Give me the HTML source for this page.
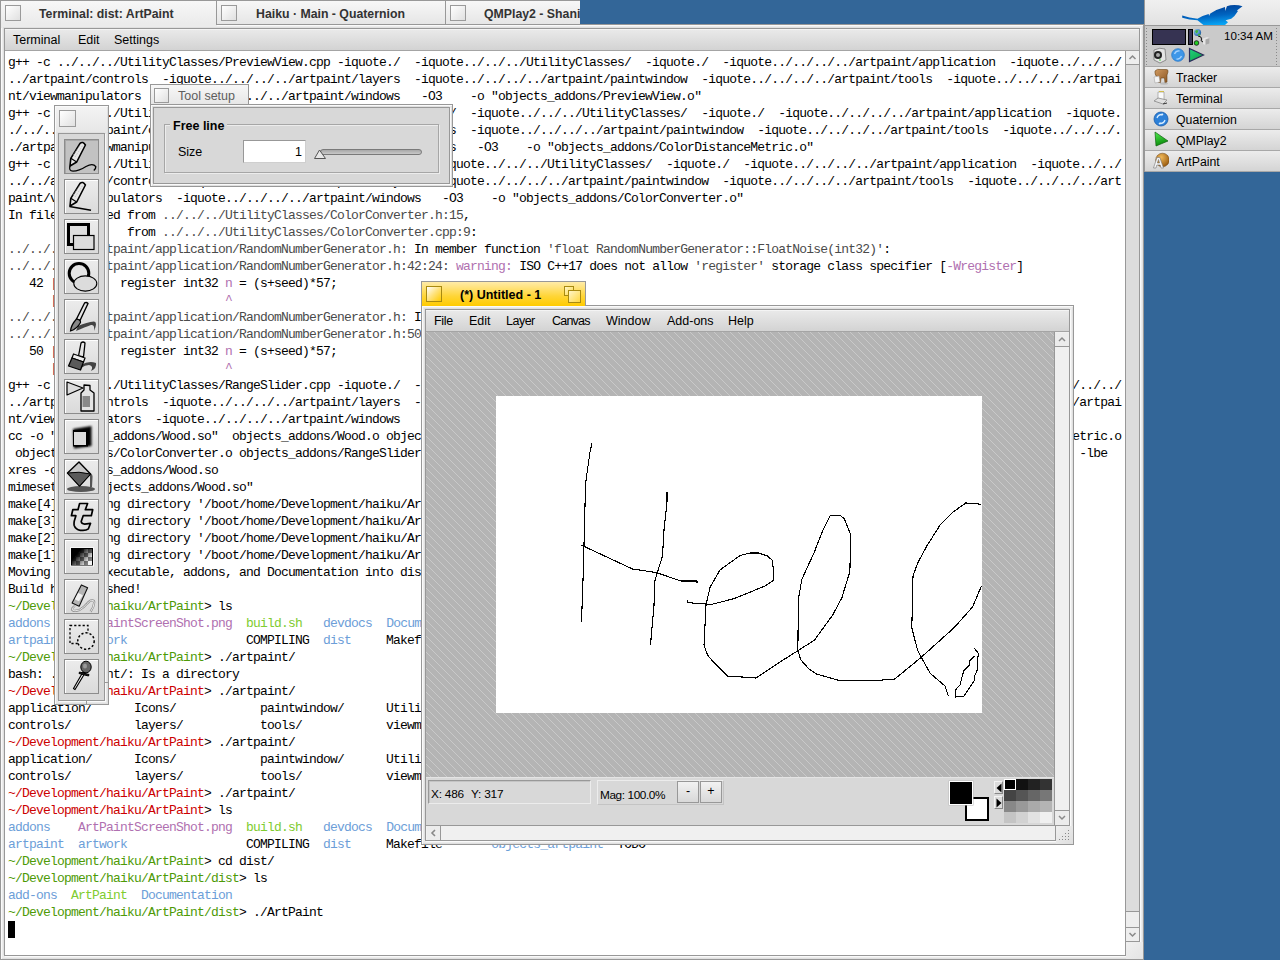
<!DOCTYPE html>
<html><head><meta charset="utf-8"><title>Haiku</title><style>
*{margin:0;padding:0;box-sizing:border-box}
html,body{width:1280px;height:960px;overflow:hidden}
body{background:#336698;position:relative;font-family:"Liberation Sans",sans-serif;font-size:13px;color:#000}
.a{position:absolute}
.tab{position:absolute;border:1px solid #989898;border-bottom:none;background:linear-gradient(#f7f7f7,#e6e6e6)}
.cb{position:absolute;width:16px;height:16px;border:1px solid #9a9a9a;background:linear-gradient(135deg,#ffffff,#e0e0e0)}
.ttl{position:absolute;font-weight:bold;font-size:12.3px;color:#333;white-space:nowrap;line-height:16px}
.frm{position:absolute;border:1px solid #989898;background:#ececec;box-shadow:inset 1px 1px 0 #fafafa, inset -1px -1px 0 #e0e0e0}
.inr{position:absolute;border:1px solid #989898;box-shadow:1px 1px 0 #fafafa, -1px -1px 0 #e0e0e0}
.mb{position:absolute;background:linear-gradient(#e9e9e9,#d3d3d3);border-top:1px solid #f4f4f4;border-bottom:1px solid #a4a4a4}
.mi{position:absolute;top:2px;font-size:12.5px;line-height:16px;white-space:nowrap;color:#000}
.term{position:absolute;left:8px;top:54px;font-family:"Liberation Mono",monospace;font-size:13px;letter-spacing:-0.8px;line-height:17px;white-space:pre;color:#000}
.btn{position:absolute;left:64px;width:35px;height:35px;border:1px solid #8c8c8c;background:linear-gradient(#ececec,#e4e4e4 45%,#dadada);box-shadow:inset 1px 1px 0 #fff}
.btn svg{position:absolute;left:0;top:0}
.de{position:absolute;left:1145px;width:135px;height:21px;border-top:1px solid #a8a8a8;background:linear-gradient(#ececec,#d4d4d4)}
.de span{position:absolute;left:31px;top:3px;font-size:12.3px;line-height:16px;color:#000}
.de svg{position:absolute;left:8px;top:2px}

</style></head><body>
<!-- ================= TERMINAL WINDOW ================= -->
<div class="frm" style="left:0;top:24px;width:1144px;height:936px"></div>
<div class="tab" style="left:0;top:0;width:217px;height:28px;border-right:none;background:linear-gradient(#f7f7f7,#ebebeb 85%)"></div>
<div class="tab" style="left:216px;top:0;width:230px;height:25px;border-bottom:1px solid #989898"></div>
<div class="tab" style="left:445px;top:0;width:135px;height:25px;border-bottom:1px solid #989898;border-right:none"></div>
<div class="cb" style="left:5px;top:5px"></div>
<div class="cb" style="left:221px;top:5px"></div>
<div class="cb" style="left:450px;top:5px"></div>
<div class="ttl" style="left:39px;top:6px">Terminal: dist: ArtPaint</div>
<div class="ttl" style="left:256px;top:6px">Haiku · Main - Quaternion</div>
<div class="ttl" style="left:484px;top:6px;width:96px;overflow:hidden">QMPlay2 - Shania Twain</div>
<div class="inr" style="left:4px;top:28px;width:1136px;height:928px;background:#fff"></div>
<div class="mb" style="left:5px;top:29px;width:1134px;height:22px">
  <div class="mi" style="left:8px">Terminal</div>
  <div class="mi" style="left:73px">Edit</div>
  <div class="mi" style="left:109px">Settings</div>
</div>
<div class="term">g++ -c ../../../UtilityClasses/PreviewView.cpp -iquote./  -iquote../../../UtilityClasses/  -iquote./  -iquote../../../../artpaint/application  -iquote../../../
../artpaint/controls  -iquote../../../../artpaint/layers  -iquote../../../../artpaint/paintwindow  -iquote../../../../artpaint/tools  -iquote../../../../artpai
nt/viewmanipulators  -iquote../../../../artpaint/windows   -O3    -o &quot;objects_addons/PreviewView.o&quot;
g++ -c ../../../UtilityClasses/ColorDistanceMetric.cpp -iquote./  -iquote../../../UtilityClasses/  -iquote./  -iquote../../../../artpaint/application  -iquote.
./../../../artpaint/controls  -iquote../../../../artpaint/layers  -iquote../../../../artpaint/paintwindow  -iquote../../../../artpaint/tools  -iquote../../../.
./artpaint/viewmanipulators  -iquote../../../../artpaint/windows   -O3    -o &quot;objects_addons/ColorDistanceMetric.o&quot;
g++ -c ../../../UtilityClasses/ColorConverter.cpp -iquote./  -iquote../../../UtilityClasses/  -iquote./  -iquote../../../../artpaint/application  -iquote../../
../../artpaint/controls  -iquote../../../../artpaint/layers  -iquote../../../../artpaint/paintwindow  -iquote../../../../artpaint/tools  -iquote../../../../art
paint/viewmanipulators  -iquote../../../../artpaint/windows   -O3    -o &quot;objects_addons/ColorConverter.o&quot;
In file included from <span style="color:#4a4a4a">../../../UtilityClasses/ColorConverter.h:15</span>,
                 from <span style="color:#4a4a4a">../../../UtilityClasses/ColorConverter.cpp:9</span>:
<span style="color:#4a4a4a">../../../../artpaint/application/RandomNumberGenerator.h:</span> In member function <span style="color:#4a4a4a">&#x27;float RandomNumberGenerator::FloatNoise(int32)&#x27;</span>:
<span style="color:#4a4a4a">../../../../artpaint/application/RandomNumberGenerator.h:42:24:</span> <span style="color:#b070b0">warning:</span> ISO C++17 does not allow <span style="color:#4a4a4a">&#x27;register&#x27;</span> storage class specifier [<span style="color:#b070b0">-Wregister</span>]
   42 <span style="color:#802040">|</span>         register int32 <span style="color:#b070b0">n</span> = (s+seed)*57;
      <span style="color:#802040">|</span>                        <span style="color:#b070b0">^</span>
<span style="color:#4a4a4a">../../../../artpaint/application/RandomNumberGenerator.h:</span> In member function <span style="color:#4a4a4a">&#x27;int32 RandomNumberGenerator::IntNoise(int32)&#x27;</span>:
<span style="color:#4a4a4a">../../../../artpaint/application/RandomNumberGenerator.h:50:24:</span> <span style="color:#b070b0">warning:</span> ISO C++17 does not allow <span style="color:#4a4a4a">&#x27;register&#x27;</span> storage class specifier [<span style="color:#b070b0">-Wregister</span>]
   50 <span style="color:#802040">|</span>         register int32 <span style="color:#b070b0">n</span> = (s+seed)*57;
      <span style="color:#802040">|</span>                        <span style="color:#b070b0">^</span>
g++ -c ../../../UtilityClasses/RangeSlider.cpp -iquote./  -iquote../../../UtilityClasses/  -iquote./  -iquote../../../../artpaint/application  -iquote../../../
../artpaint/controls  -iquote../../../../artpaint/layers  -iquote../../../../artpaint/paintwindow  -iquote../../../../artpaint/tools  -iquote../../../../artpai
nt/viewmanipulators  -iquote../../../../artpaint/windows   -O3    -o &quot;objects_addons/RangeSlider.o&quot;
cc -o &quot;objects_addons/Wood.so&quot;  objects_addons/Wood.o objects_addons/PreviewView.o objects_addons/Color                    objects_addons/ColorDistanceMetric.o
 objects_addons/ColorConverter.o objects_addons/RangeSlider.o   -nostart -Xlinker -soname=Wood.so -L../../../lib                                         -lbe
xres -o objects_addons/Wood.so
mimeset -f &quot;objects_addons/Wood.so&quot;
make[4]: Leaving directory &#x27;/boot/home/Development/haiku/ArtPaint/addons/AddOns/Wood&#x27;
make[3]: Leaving directory &#x27;/boot/home/Development/haiku/ArtPaint/addons/AddOns&#x27;
make[2]: Leaving directory &#x27;/boot/home/Development/haiku/ArtPaint/addons&#x27;
make[1]: Leaving directory &#x27;/boot/home/Development/haiku/ArtPaint/addons&#x27;
Moving built executable, addons, and Documentation into dist...
Build has finished!
<span style="color:#4e9a06">~/Development/haiku/ArtPaint</span>&gt; ls
<span style="color:#6c9ed8">addons</span>    <span style="color:#b070b0">ArtPaintScreenShot.png</span>  <span style="color:#80cc30">build.sh</span>   <span style="color:#6c9ed8">devdocs</span>  <span style="color:#6c9ed8">Documentation</span>  <span style="color:#6c9ed8">objects_addons</span>    README.md
<span style="color:#6c9ed8">artpaint</span>  <span style="color:#6c9ed8">artwork</span>                 COMPILING  <span style="color:#6c9ed8">dist</span>     Makefile       <span style="color:#6c9ed8">objects_artpaint</span>  TODO
<span style="color:#4e9a06">~/Development/haiku/ArtPaint</span>&gt; ./artpaint/
bash: ./artpaint/: Is a directory
<span style="color:#cc0000">~/Development/haiku/ArtPaint</span>&gt; ./artpaint/
application/      Icons/            paintwindow/      UtilityClasses/
controls/         layers/           tools/            viewmanipulators/
<span style="color:#cc0000">~/Development/haiku/ArtPaint</span>&gt; ./artpaint/
application/      Icons/            paintwindow/      UtilityClasses/
controls/         layers/           tools/            viewmanipulators/
<span style="color:#cc0000">~/Development/haiku/ArtPaint</span>&gt; ./artpaint/
<span style="color:#cc0000">~/Development/haiku/ArtPaint</span>&gt; ls
<span style="color:#6c9ed8">addons</span>    <span style="color:#b070b0">ArtPaintScreenShot.png</span>  <span style="color:#80cc30">build.sh</span>   <span style="color:#6c9ed8">devdocs</span>  <span style="color:#6c9ed8">Documentation</span>  <span style="color:#6c9ed8">objects_addons</span>    README.md
<span style="color:#6c9ed8">artpaint</span>  <span style="color:#6c9ed8">artwork</span>                 COMPILING  <span style="color:#6c9ed8">dist</span>     Makefile       <span style="color:#6c9ed8">objects_artpaint</span>  TODO
<span style="color:#4e9a06">~/Development/haiku/ArtPaint</span>&gt; cd dist/
<span style="color:#4e9a06">~/Development/haiku/ArtPaint/dist</span>&gt; ls
<span style="color:#6c9ed8">add-ons</span>  <span style="color:#80cc30">ArtPaint</span>  <span style="color:#6c9ed8">Documentation</span>
<span style="color:#4e9a06">~/Development/haiku/ArtPaint/dist</span>&gt; ./ArtPaint</div>
<div class="a" style="left:8px;top:921px;width:7px;height:17px;background:#000"></div>
<!-- terminal scrollbar -->
<div class="a" style="left:1125px;top:51px;width:14px;height:891px;background:#dcdcdc;border-left:1px solid #989898"></div>
<div class="a" style="left:1126px;top:51px;width:13px;height:14px;background:#eeeeee;border-bottom:1px solid #989898"></div>
<div class="a" style="left:1126px;top:911px;width:13px;height:17px;background:#eeeeee;border-top:1px solid #989898;border-bottom:1px solid #989898"></div>
<div class="a" style="left:1126px;top:928px;width:13px;height:14px;background:#eeeeee;border-bottom:1px solid #989898"></div>
<div class="a" style="left:1126px;top:942px;width:17px;height:17px;background:linear-gradient(135deg,#f0f0f0,#e4e4e4)"></div>
<div class="a" style="left:1125px;top:942px;width:1px;height:14px;background:#989898"></div>
<svg class="a" style="left:1126px;top:51px" width="13" height="13"><path d="M3.5 8 L6.5 5 L9.5 8" fill="none" stroke="#8a8a8a" stroke-width="1.5"/></svg>
<svg class="a" style="left:1126px;top:928px" width="13" height="13"><path d="M3.5 5 L6.5 8 L9.5 5" fill="none" stroke="#8a8a8a" stroke-width="1.5"/></svg>

<!-- ================= TOOLBOX ================= -->
<div class="frm" style="left:54px;top:105px;width:55px;height:600px;background:linear-gradient(#f4f4f4,#e6e6e6 28px,#e8e8e8 28px)"></div>
<div class="cb" style="left:59px;top:110px;width:17px;height:17px"></div>
<div class="inr" style="left:58px;top:133px;width:47px;height:568px;background:#d8d8d8"></div>
<div class="a" style="left:86px;top:682px;width:23px;height:23px;border-left:1px solid #a0a0a0;border-top:1px solid #a0a0a0;display:none"></div>
<!-- buttons -->
<div class="btn" style="top:139px;background:#c2c2c2;border-color:#8c8c8c;box-shadow:inset 1px 1px 0 #a8a8a8"><svg width="35" height="35" viewBox="0 0 35 35">
<path d="M5 26 L5.8 18.3 L15 3.3 Q17.9 1 20.4 5 L11.7 22 Z" fill="#e8e8e8" stroke="#000" stroke-width="1.6" stroke-linejoin="round"/>
<path d="M5.8 18.3 L11.7 22" stroke="#000" stroke-width="1.2"/>
<path d="M8 15 L16 4 M10 17 L18 5" stroke="#aaa" stroke-width="0.7" stroke-dasharray="1 1"/>
<path d="M5 26 Q3.5 31 8 31.2 Q14 31 21 26.5 Q28 22.5 30.8 26.7 Q31 28.5 28.8 30.4" fill="none" stroke="#000" stroke-width="1.3"/>
</svg></div>
<div class="btn" style="top:179px"><svg width="35" height="35" viewBox="0 0 35 35">
<path d="M5 26 L5.8 18.3 L15 3.3 Q17.9 1 20.4 5 L11.7 22 Z" fill="#e8e8e8" stroke="#000" stroke-width="1.6" stroke-linejoin="round"/>
<path d="M5.8 18.3 L11.7 22" stroke="#000" stroke-width="1.2"/>
<path d="M8 15 L16 4 M10 17 L18 5" stroke="#aaa" stroke-width="0.7" stroke-dasharray="1 1"/>
<path d="M4.5 26.5 L26 30.3" fill="none" stroke="#000" stroke-width="1.4"/>
</svg></div>
<div class="btn" style="top:219px"><svg width="35" height="35" viewBox="0 0 35 35">
<rect x="3.5" y="4.5" width="20" height="20" fill="#dedede" stroke="#000" stroke-width="3"/>
<rect x="8.5" y="15.5" width="20.5" height="14" fill="#dcdcdc" stroke="#000" stroke-width="1.2"/>
</svg></div>
<div class="btn" style="top:259px"><svg width="35" height="35" viewBox="0 0 35 35">
<circle cx="14" cy="13.3" r="9.8" fill="#e4e4e4" stroke="#000" stroke-width="3"/>
<ellipse cx="20.3" cy="23.5" rx="11.5" ry="7.6" fill="#dcdcdc" stroke="#000" stroke-width="1.1"/>
</svg></div>
<div class="btn" style="top:299px"><svg width="35" height="35" viewBox="0 0 35 35">
<path d="M13 26 Q22 22 29 21.5 Q33 22 29 31 Q30 24 26 25 Q20 27 11 31 Z" fill="#444"/>
<path d="M11.5 19 L19.7 2.8 Q21.5 1.8 23 3.5 L15 20.5 Z" fill="#e6e6e6" stroke="#000" stroke-width="1.4" stroke-linejoin="round"/>
<path d="M11.5 19 Q16 20 15.5 22.5 Q12 29 5.5 31 Q6 25 11.5 19 Z" fill="#888" stroke="#000" stroke-width="1.2"/>
</svg></div>
<div class="btn" style="top:339px"><svg width="35" height="35" viewBox="0 0 35 35">
<path d="M16 25 Q24 20 31 23 Q32 28 26 31 Q29 26 24 25 Q20 25 16 28 Z" fill="#444"/>
<path d="M13.5 16 L16 3 Q18 1 20 3 L18.5 17 Z" fill="#e6e6e6" stroke="#000" stroke-width="1.3" stroke-linejoin="round"/>
<path d="M8.5 14 L20 18 L18.5 22 L7 18 Z" fill="#eee" stroke="#000" stroke-width="1.2"/>
<path d="M7 18 L18.5 22 L15.5 30 L3.5 26 Z" fill="#5a5a5a" stroke="#000" stroke-width="1.3" stroke-linejoin="round"/>
</svg></div>
<div class="btn" style="top:379px"><svg width="35" height="35" viewBox="0 0 35 35">
<path d="M2 2 L18 8 L2 15 Z" fill="#dcdcdc" stroke="#000" stroke-width="1.2" stroke-linejoin="round"/>
<path d="M16 31 L16 13 L19 10 L19 5 L25 5.5 L25 10 L29 13 L29 31 Z" fill="#e4e4e4" stroke="#000" stroke-width="1.3" stroke-linejoin="round"/>
<rect x="17.5" y="16" width="7.5" height="11" fill="#8a8a8a"/>
</svg></div>
<div class="btn" style="top:419px"><svg width="35" height="35" viewBox="0 0 35 35">
<defs><filter id="bl" x="-50%" y="-50%" width="200%" height="200%"><feGaussianBlur stdDeviation="1.1"/></filter></defs>
<path d="M8 9 L26.5 6 L26.5 26 L9 28.5 Z" fill="#000" filter="url(#bl)"/>
<rect x="8" y="10" width="15" height="16.5" fill="#000"/>
<rect x="9" y="12" width="12" height="13" fill="#dcdcdc"/>
</svg></div>
<div class="btn" style="top:459px"><svg width="35" height="35" viewBox="0 0 35 35">
<ellipse cx="16" cy="29" rx="14" ry="3" fill="#555"/>
<path d="M25 13 Q28 14 27.5 18 L27 27 L25 27 Z" fill="#555"/>
<path d="M14 2 L25.5 14 L14.5 26 L2.5 13 Z" fill="#c8c8c8" stroke="#000" stroke-width="1.4" stroke-linejoin="round"/>
<path d="M2.5 13 Q14 11 25.5 14 L14.5 26 Z" fill="#5a5a5a" stroke="#000" stroke-width="1" stroke-linejoin="round"/>
</svg></div>
<div class="btn" style="top:499px"><svg width="35" height="35" viewBox="0 0 35 35">
<path d="M14.6 3.5 L22.6 3.5 L20.3 9.7 L27.7 9.7 L26.3 15.7 L18.2 15.7 L16.2 21.5 Q16.5 24 19.7 24.1 L25.5 23.4 L23.4 28.8 Q21.5 30.3 18 30.3 L15.3 30.3 Q10.5 29.5 9.2 25.5 Q8.8 23.7 9.3 21 L10.9 15.7 L6.4 15.7 L7.8 9.7 L13 9.7 Z" fill="#e0e0e0" stroke="#000" stroke-width="1.7" stroke-linejoin="round"/>
</svg></div>
<div class="btn" style="top:539px"><svg width="35" height="35" viewBox="0 0 35 35">
<defs><pattern id="ck" width="8" height="8" patternUnits="userSpaceOnUse" x="7" y="9"><rect width="8" height="8" fill="#808080"/><rect x="4" width="4" height="4" fill="#f4f4f4"/><rect y="4" width="4" height="4" fill="#f4f4f4"/></pattern>
<linearGradient id="gg" x1="0" y1="0" x2="1" y2="0.7"><stop offset="0.3" stop-color="#000"/><stop offset="0.95" stop-color="#000" stop-opacity="0"/></linearGradient></defs>
<rect x="5.5" y="7.5" width="23" height="18.5" fill="none" stroke="#f8f8f8" stroke-width="1"/>
<rect x="6" y="8" width="22" height="17.5" fill="#000"/>
<rect x="7" y="9" width="20" height="16" fill="url(#ck)"/>
<rect x="7" y="9" width="20" height="16" fill="url(#gg)"/>
</svg></div>
<div class="btn" style="top:579px"><svg width="35" height="35" viewBox="0 0 35 35">
<path d="M9.9 25.9 Q6 28.5 7.3 30 Q9 31.8 14.6 29.9 Q19 27.5 21.9 23.7 Q25 20.5 26.3 20.4 Q29.5 20 29.2 22.5 Q29 27 25.5 31.75" fill="none" stroke="#8a8a8a" stroke-width="2.2"/>
<path d="M9.9 25.9 Q6 28.5 7.3 30 Q9 31.8 14.6 29.9 Q19 27.5 21.9 23.7 Q25 20.5 26.3 20.4 Q29.5 20 29.2 22.5 Q29 27 25.5 31.75" fill="none" stroke="#f4f4f4" stroke-width="0.9"/>
<path d="M16.4 4.9 L22.6 7.8 L14.2 26.3 L7.1 23 Z" fill="#b4b4b4"/>
<path d="M12.4 12.4 L17.9 15.3 L13.9 21.2 L9.1 19 Z" fill="#f2f2f2"/>
<path d="M16.4 4.9 L22.6 7.8 L14.2 26.3 L7.1 23 Z" fill="none" stroke="#111" stroke-width="1.1" stroke-linejoin="round"/>
</svg></div>
<div class="btn" style="top:619px"><svg width="35" height="35" viewBox="0 0 35 35">
<rect x="5" y="5.5" width="18" height="18" fill="none" stroke="#000" stroke-width="1.3" stroke-dasharray="2.2 2"/>
<circle cx="21" cy="21" r="8.2" fill="#e4e4e4" stroke="#000" stroke-width="1.5" stroke-dasharray="2.2 2"/>
</svg></div>
<div class="btn" style="top:659px"><svg width="35" height="35" viewBox="0 0 35 35">
<path d="M20 13 L10 29.5 L8.5 28.5 L18 12 Z" fill="#fff" stroke="#000" stroke-width="1.2" stroke-linejoin="round"/>
<path d="M14.5 12 L24 14.5 L23.5 16 L14 13.5 Z" fill="#222" stroke="#000" stroke-width="1"/>
<ellipse cx="21" cy="7" rx="5.2" ry="5.8" fill="#666" stroke="#000" stroke-width="1"/>
<ellipse cx="20" cy="6" rx="2" ry="2.5" fill="#999"/>
</svg></div>
<div class="a" style="left:105px;top:682px;width:3px;height:1px;background:#989898"></div>
<div class="a" style="left:86px;top:701px;width:1px;height:3px;background:#989898"></div>

<!-- ================= TOOL SETUP ================= -->
<div class="tab a" style="left:150px;top:84px;width:99px;height:21px"></div>
<div class="cb" style="left:154px;top:88px;width:15px;height:15px"></div>
<div class="a" style="left:178px;top:89px;font-size:12.5px;line-height:14px;color:#5e5e5e;white-space:nowrap">Tool setup</div>
<div class="frm" style="left:150px;top:104px;width:303px;height:83px"></div>
<div class="inr" style="left:153px;top:107px;width:297px;height:77px;background:#d8d8d8"></div>
<div class="a" style="left:164px;top:124px;width:275px;height:49px;border:1px solid #a6a6a6;box-shadow:1px 1px 0 #ececec, inset 1px 1px 0 #ececec"></div>
<div class="a" style="left:170px;top:118px;padding:0 3px;background:#d8d8d8;font-weight:bold;font-size:12.5px;line-height:16px;white-space:nowrap">Free line</div>
<div class="a" style="left:178px;top:144px;font-size:12.5px;line-height:16px">Size</div>
<div class="a" style="left:243px;top:140px;width:63px;height:23px;background:#fff;border:1px solid #989898;border-right-color:#cfcfcf;border-bottom-color:#cfcfcf"></div>
<div class="a" style="left:295px;top:144px;font-size:12.5px;line-height:16px">1</div>
<div class="a" style="left:320px;top:149px;width:102px;height:6px;border-radius:3px;background:linear-gradient(#a8a8a8,#c8c8c8);border:1px solid #7a7a7a"></div>
<svg class="a" style="left:313px;top:148px" width="15" height="12"><path d="M1.5 10.5 L6.5 2 L12.5 10.5 Z" fill="#e8e8e8" stroke="#555" stroke-width="1"/></svg>

<!-- ================= ARTPAINT WINDOW ================= -->
<div class="frm" style="left:421px;top:305px;width:653px;height:540px"></div>
<div class="a" style="left:421px;top:281px;width:165px;height:25px;border:1px solid #989898;border-bottom:none;background:linear-gradient(#ffeba8,#ffd535 60%,#ffcb00)"></div>
<div class="a" style="left:426px;top:286px;width:16px;height:16px;border:1px solid #a88a10;background:linear-gradient(135deg,#ffffff,#ffe27a 50%,#ffcb00)"></div>
<div class="a" style="left:460px;top:287px;font-weight:bold;font-size:12.5px;line-height:16px;white-space:nowrap">(*) Untitled - 1</div>
<div class="a" style="left:564px;top:286px;width:10px;height:10px;border:1px solid #a88a10;background:linear-gradient(135deg,#fff5c8,#ffd840)"></div>
<div class="a" style="left:568px;top:290px;width:13px;height:13px;border:1px solid #a88a10;background:linear-gradient(135deg,#fff5c8,#ffd840)"></div>
<div class="inr" style="left:425px;top:309px;width:645px;height:532px;background:#d8d8d8"></div>
<div class="mb" style="left:426px;top:310px;width:643px;height:22px">
  <div class="mi" style="left:8px;top:2px;letter-spacing:-0.3px">File</div>
  <div class="mi" style="left:43px;top:2px">Edit</div>
  <div class="mi" style="left:80px;top:2px;letter-spacing:-0.5px">Layer</div>
  <div class="mi" style="left:126px;top:2px;letter-spacing:-0.8px">Canvas</div>
  <div class="mi" style="left:180px;top:2px">Window</div>
  <div class="mi" style="left:241px;top:2px">Add-ons</div>
  <div class="mi" style="left:302px;top:2px">Help</div>
</div>
<svg class="a" style="left:426px;top:332px" width="628" height="446">
<defs><pattern id="hat" width="8" height="8" patternUnits="userSpaceOnUse" x="0" y="0">
<rect width="8" height="8" fill="#b4b4b4"/>
<g fill="#c9c9c9"><rect x="0" y="0" width="1" height="1"/><rect x="1" y="1" width="1" height="1"/><rect x="2" y="2" width="1" height="1"/><rect x="3" y="3" width="1" height="1"/><rect x="4" y="4" width="1" height="1"/><rect x="5" y="5" width="1" height="1"/><rect x="6" y="6" width="1" height="1"/><rect x="7" y="7" width="1" height="1"/></g>
</pattern></defs>
<rect width="628" height="446" fill="url(#hat)" shape-rendering="crispEdges"/>
<rect x="70" y="64" width="486" height="317" fill="#fff"/>
<g fill="none" stroke="#000" stroke-width="1.1" transform="translate(-426,-332)" stroke-linejoin="round" shape-rendering="crispEdges">
<polyline points="592,443 590,452 586,480 585,505 584,545 583,580 581.5,622"/>
<polyline points="581,545 632.5,569 656,572.5 681,581 697,581 697,583"/>
<polyline points="667,492 667,502 664,530 662.5,556 655,580 654,605 650.5,645"/>
<polyline points="687.5,600 687.5,602.5 698,603.5 706,604 711,604.5 733.75,598.75 765,586 773.75,580 773.75,571 772,560 767.5,556 758.75,553 750,553 740,555.5 720,570 710,587.5 706,605 704,645 707.5,655 712.5,661 727.5,676 756,678 780,662 814.4,640.2 832.7,615 841.9,597.7 849.9,571.4 850.6,534.7 844.2,518.7 840,515.2 830.4,515.2 822.4,531.3 814.4,551.9 801.8,579.4 798.3,600 797.9,650.5 800.6,659.6 808.7,668.8 816.7,674.1 838.5,680.3 872.8,680.7 894.6,679.1 919.8,658.5 954.2,627.6 972.6,606.9 981.3,586.3"/>
<polyline points="981.3,504.2 965.7,503 951.9,512.9 940.5,524.4 926.7,546.2 917.5,563.4 913,576 911.8,627.6 917.6,650.5 930.2,673.4 945,686 948.5,696.3"/>
<polyline points="974.6,656 969.6,661 969.6,665 963.75,671 961.7,678 960,685 955.4,690 955.4,697 958,696.7 963.75,696.3 969.2,688.3 974.2,680.8 974.6,675.8 977.5,669.6 977.9,657.5 978.3,653.3 974.2,648"/>
</g>
</svg>
<div class="a" style="left:426px;top:777px;width:628px;height:1px;background:#e4e4e4"></div>
<!-- v scrollbar -->
<div class="a" style="left:1054px;top:332px;width:15px;height:494px;background:#f0f0f0;border-left:1px solid #989898;border-bottom:1px solid #989898"></div>
<div class="a" style="left:1055px;top:333px;width:14px;height:14px;background:#ececec;border-bottom:1px solid #989898"></div>
<div class="a" style="left:1055px;top:810px;width:14px;height:15px;background:#ececec;border-top:1px solid #989898"></div>
<svg class="a" style="left:1055px;top:333px" width="14" height="13"><path d="M4 8 L7 5 L10 8" fill="none" stroke="#8a8a8a" stroke-width="1.5"/></svg>
<svg class="a" style="left:1055px;top:811px" width="14" height="13"><path d="M4 5 L7 8 L10 5" fill="none" stroke="#8a8a8a" stroke-width="1.5"/></svg>
<!-- status -->
<div class="a" style="left:428px;top:780px;width:163px;height:24px;border:1px solid #989898;border-right-color:#ececec;border-bottom-color:#ececec;box-shadow:inset 1px 1px 0 #c4c4c4"></div>
<div class="a" style="left:431px;top:786px;font-size:11.8px;line-height:16px;white-space:pre;letter-spacing:-0.2px">X: 486</div><div class="a" style="left:471px;top:786px;font-size:11.8px;line-height:16px;white-space:pre;letter-spacing:-0.2px">Y: 317</div>
<div class="a" style="left:597px;top:780px;width:127px;height:25px;border:1px solid #ececec;border-right-color:#c4c4c4;border-bottom-color:#c4c4c4"></div>
<div class="a" style="left:600px;top:787px;font-size:11.8px;line-height:16px;white-space:pre;letter-spacing:-0.4px">Mag: 100.0%</div>
<div class="a" style="left:677px;top:781px;width:22px;height:22px;border:1px solid #989898;background:linear-gradient(#f2f2f2,#d8d8d8);font-size:12.5px;line-height:19px;text-align:center">-</div>
<div class="a" style="left:700px;top:781px;width:22px;height:22px;border:1px solid #989898;background:linear-gradient(#f2f2f2,#d8d8d8);font-size:12.5px;line-height:19px;text-align:center">+</div>
<div class="a" style="left:965px;top:797px;width:24px;height:24px;background:#fff;border:2px solid #000"></div>
<div class="a" style="left:949px;top:781px;width:24px;height:24px;background:#000;border:1px solid #fff;box-shadow:0 0 0 0.5px #bbb"></div>
<div class="a" style="left:963px;top:795px;width:12px;height:12px;background:#000;border-right:2px solid #fff;border-bottom:2px solid #fff;display:none"></div>
<div class="a" style="left:994px;top:781px;width:9px;height:13px;border:1px solid #f4f4f4;border-right-color:#888;border-bottom-color:#888;background:#dcdcdc"></div>
<svg class="a" style="left:995px;top:782px" width="8" height="12"><path d="M6.5 1.5 L1.5 6 L6.5 10.5 Z" fill="#000"/></svg>
<div class="a" style="left:994px;top:796px;width:9px;height:13px;border:1px solid #f4f4f4;border-right-color:#888;border-bottom-color:#888;background:#dcdcdc"></div>
<svg class="a" style="left:995px;top:797px" width="8" height="12"><path d="M1.5 1.5 L6.5 6 L1.5 10.5 Z" fill="#000"/></svg>
<div class="a" style="left:1004px;top:779px;width:48px;height:44px;display:grid;grid-template-columns:repeat(4,12px);grid-template-rows:repeat(4,11px)">
<div style="background:#000;border:1px solid #fff"></div><div style="background:#111"></div><div style="background:#222"></div><div style="background:#333"></div>
<div style="background:#444"></div><div style="background:#555"></div><div style="background:#666"></div><div style="background:#777"></div>
<div style="background:#888"></div><div style="background:#999"></div><div style="background:#aaa"></div><div style="background:#b4b4b4"></div>
<div style="background:#c4c4c4"></div><div style="background:#d2d2d2"></div><div style="background:#e2e2e2"></div><div style="background:#f0f0f0"></div>
</div>
<!-- h scrollbar -->
<div class="a" style="left:426px;top:825px;width:630px;height:16px;background:#f0f0f0;border-top:1px solid #989898;border-right:1px solid #989898;border-bottom:1px solid #989898"></div>
<div class="a" style="left:427px;top:826px;width:14px;height:14px;background:#ececec;border-right:1px solid #989898"></div>
<svg class="a" style="left:427px;top:826px" width="13" height="14"><path d="M8 4 L5 7 L8 10" fill="none" stroke="#888" stroke-width="1.6"/></svg>
<div class="a" style="left:1056px;top:826px;width:17px;height:18px;background:linear-gradient(135deg,#f0f0f0,#dedede)"></div>
<svg class="a" style="left:1056px;top:826px" width="16" height="16"><g fill="#888"><rect x="12" y="4" width="1" height="1"/><rect x="9" y="7" width="1" height="1"/><rect x="12" y="7" width="1" height="1"/><rect x="6" y="10" width="1" height="1"/><rect x="9" y="10" width="1" height="1"/><rect x="12" y="10" width="1" height="1"/><rect x="3" y="13" width="1" height="1"/><rect x="6" y="13" width="1" height="1"/><rect x="9" y="13" width="1" height="1"/><rect x="12" y="13" width="1" height="1"/></g></svg>

<!-- ================= DESKBAR ================= -->
<div class="a" style="left:1144px;top:0;width:136px;height:172px;background:#989898"></div>
<div class="a" style="left:1145px;top:0;width:135px;height:25px;background:linear-gradient(#f0f0f0,#e2e2e2)"></div>
<svg class="a" style="left:1175px;top:0" width="80" height="25">
<defs><linearGradient id="fth" x1="0.3" y1="0" x2="0.6" y2="1"><stop offset="0" stop-color="#003a90"/><stop offset="0.55" stop-color="#0064c0"/><stop offset="1" stop-color="#08a8f8"/></linearGradient></defs>
<path d="M7.2 15.6 Q14 18 22.5 18.75 Q27 15.5 33.75 14 L34 16 L35.3 13.4 Q42 9 50 6.9 L50.3 10.9 L51.9 6.25 Q55 5 59.4 5 Q64 5 67.5 6.25 L61.9 10.6 L63 10.9 Q60 16 56.25 18.75 L50.6 20.3 L53 22.2 L50 25 L28.4 25 L22.5 20.3 Q14 20 7.2 17.8 Z" fill="url(#fth)"/>
</svg>
<div class="a" style="left:1145px;top:26px;width:135px;height:40px;background:#cacaca"></div>
<svg class="a" style="left:1145px;top:26px" width="135" height="40"><g fill="#8a8a8a"><rect x="1" y="2" width="1" height="1"/><rect x="1" y="5" width="1" height="1"/><rect x="1" y="8" width="1" height="1"/><rect x="1" y="11" width="1" height="1"/><rect x="1" y="14" width="1" height="1"/><rect x="1" y="17" width="1" height="1"/><rect x="1" y="20" width="1" height="1"/><rect x="1" y="23" width="1" height="1"/><rect x="1" y="26" width="1" height="1"/><rect x="1" y="29" width="1" height="1"/><rect x="1" y="32" width="1" height="1"/><rect x="1" y="35" width="1" height="1"/><rect x="1" y="38" width="1" height="1"/>
<rect x="131" y="2" width="1" height="1"/><rect x="131" y="5" width="1" height="1"/><rect x="131" y="8" width="1" height="1"/><rect x="131" y="11" width="1" height="1"/><rect x="131" y="14" width="1" height="1"/><rect x="131" y="17" width="1" height="1"/><rect x="131" y="20" width="1" height="1"/><rect x="131" y="23" width="1" height="1"/><rect x="131" y="26" width="1" height="1"/><rect x="131" y="29" width="1" height="1"/><rect x="131" y="32" width="1" height="1"/><rect x="131" y="35" width="1" height="1"/><rect x="131" y="38" width="1" height="1"/></g></svg>
<div class="a" style="left:1152px;top:29px;width:34px;height:16px;background:#363352;border:1.5px solid #000"></div>
<div class="a" style="left:1188px;top:29px;width:5px;height:16px;background:#363352;border:1px solid #000"></div>
<svg class="a" style="left:1193px;top:28px" width="18" height="18">
<defs><radialGradient id="glb" cx="0.35" cy="0.35" r="0.7"><stop offset="0" stop-color="#9ad0ff"/><stop offset="1" stop-color="#1a5aa0"/></radialGradient></defs>
<path d="M5 8 Q9 8.5 8.5 11 Q7 13 10 14" fill="none" stroke="#111" stroke-width="1"/>
<circle cx="4.5" cy="4.5" r="3.6" fill="url(#glb)"/><path d="M2 3 Q3.5 1.5 5.5 2.5 Q5 5 3 5.5 Z M5 6 Q7 5 7.5 7 Q6 8 5 7.5 Z" fill="#40b040"/>
<circle cx="3.5" cy="15" r="2.3" fill="#22cc22" stroke="#111" stroke-width="0.8"/>
<path d="M10 10.5 L14 9 L16.5 10 L16.5 15.5 L12.5 17 L10 16 Z" fill="#e4e4e4"/><path d="M12.5 11.5 L16.5 10 L16.5 15.5 L12.5 17 Z" fill="#a8a8a8"/>
</svg>
<div class="a" style="left:1224px;top:29px;font-size:11.6px;line-height:14px;white-space:nowrap;color:#000">10:34 AM</div>
<svg class="a" style="left:1152px;top:47px" width="16" height="17">
<path d="M2 3 Q8 0 13 2 L14 13 L8 16 L2 13 Z" fill="#e4e4e4" stroke="#777" stroke-width="0.8"/>
<circle cx="6" cy="8" r="4" fill="#222"/><circle cx="6" cy="8" r="2" fill="#aaa"/><circle cx="8" cy="13" r="0.8" fill="#2c2"/>
</svg>
<svg class="a" style="left:1171px;top:48px" width="15" height="15"><circle cx="7" cy="7" r="6.3" fill="#3f97e8" stroke="#2a78c8" stroke-width="0.8"/><path d="M3.5 6 Q5 2.5 8.5 3 M10.5 8 Q9 11.5 5.5 11" fill="none" stroke="#a8d4ff" stroke-width="1.3"/></svg>
<svg class="a" style="left:1188px;top:47px" width="17" height="16"><path d="M1.5 1.5 L15.5 8 L1.5 14.5 Z" fill="url(#qg)" stroke="#2a2a5a" stroke-width="1.2"/><defs><linearGradient id="qg" x1="0" y1="0" x2="1" y2="1"><stop offset="0" stop-color="#20d080"/><stop offset="1" stop-color="#10a040"/></linearGradient></defs></svg>
<div class="a" style="left:1145px;top:66px;width:135px;height:106px;background:#a8a8a8"></div>
<div class="de" style="top:66px"><svg width="16" height="18" style="top:1px"><defs><linearGradient id="dg" x1="0" y1="0" x2="1" y2="1"><stop offset="0" stop-color="#d09a60"/><stop offset="1" stop-color="#8a5420"/></linearGradient></defs><path d="M2 3 Q4 0.5 8 1.5 L13 1.5 Q15.5 1 15 4 L14 7 L14 14 L12 15 L11.5 10 L8 10 L7.5 14.5 L5.5 14.5 L5 9 Q2 8 2 5 Z" fill="url(#dg)" stroke="#6a4418" stroke-width="0.6"/><path d="M1 9 L6 8 L7 14 L2 15 Z" fill="#f4f4f4" stroke="#999" stroke-width="0.5"/><ellipse cx="11" cy="15.5" rx="4" ry="1.2" fill="#aaa" opacity="0.6"/></svg><span>Tracker</span></div>
<div class="de" style="top:87px"><svg width="16" height="16"><rect x="6" y="1" width="5" height="2" fill="#f0d020"/><path d="M5 2 L11 2 L11 10 L5 10 Z" fill="#fafafa" stroke="#999" stroke-width="0.7"/><path d="M1 11 L5 8 L14 10 L10 14 Z" fill="#e0e0e0" stroke="#888" stroke-width="0.8"/><path d="M10 14 L14 13" stroke="#333" stroke-width="1"/></svg><span>Terminal</span></div>
<div class="de" style="top:108px"><svg width="16" height="16"><circle cx="8" cy="8" r="7" fill="#2c80d8" stroke="#1a5aa8" stroke-width="0.8"/><path d="M4 7 Q5 3.5 9 3.5 M12 9 Q11 12.5 7 12.5" fill="none" stroke="#d8ecff" stroke-width="1.3"/><path d="M9 2 L10.5 3.7 L8.5 5 Z M7 14 L5.5 12.3 L7.5 11 Z" fill="#d8ecff"/></svg><span>Quaternion</span></div>
<div class="de" style="top:129px"><svg width="16" height="18" style="top:1px"><defs><linearGradient id="qpg" x1="0" y1="0" x2="0.3" y2="1"><stop offset="0" stop-color="#50f050"/><stop offset="1" stop-color="#0c8a0c"/></linearGradient></defs><path d="M2 1 L15 10 L3 15 Z" fill="url(#qpg)" stroke="#106010" stroke-width="0.7" stroke-linejoin="round"/></svg><span>QMPlay2</span></div>
<div class="de" style="top:150px"><svg width="16" height="18" style="top:1px"><defs><radialGradient id="apg" cx="0.4" cy="0.3" r="0.7"><stop offset="0" stop-color="#f0b858"/><stop offset="1" stop-color="#9a5c10"/></radialGradient></defs><circle cx="9.5" cy="8" r="6.8" fill="url(#apg)" stroke="#6a4010" stroke-width="0.5"/><path d="M0.5 16 L4 5.5 L6.8 5.5 L10.5 16 L8 16 L7.2 13 L3.8 13 L3 16 Z M4.3 11 L6.6 11 L5.5 7.5 Z" fill="#f6f6f6" stroke="#777" stroke-width="0.6" fill-rule="evenodd"/></svg><span>ArtPaint</span></div>


</body></html>
